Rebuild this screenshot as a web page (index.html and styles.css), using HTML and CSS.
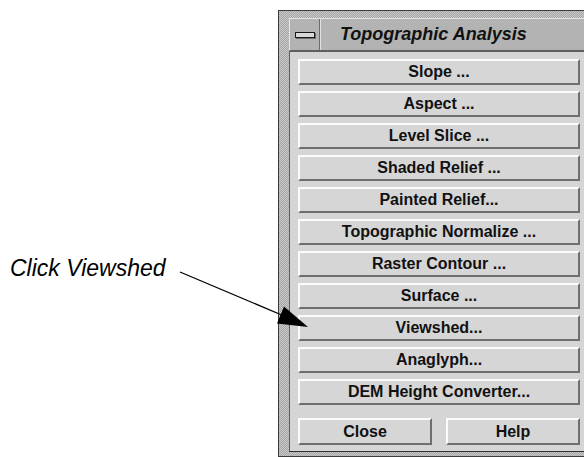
FILE: index.html
```html
<!DOCTYPE html>
<html lang="en">
<head>
    <meta charset="UTF-8">
    <meta name="viewport" content="width=device-width, initial-scale=1.0">
    <title>Topographic Analysis</title>
    <link rel="stylesheet" href="styles.css">
</head>
<body>
    <div class="page">
        <div class="callout">
            <span class="callout-label">Click Viewshed</span>
        </div>

        <div class="window">
            <div class="titlebar">
                <div class="menu-button"><span class="menu-glyph"></span></div>
                <div class="title">Topographic Analysis</div>
            </div>
            <div class="panel">
                <div class="actions">
                    <button type="button">Slope ...</button>
                    <button type="button">Aspect ...</button>
                    <button type="button">Level Slice ...</button>
                    <button type="button">Shaded Relief ...</button>
                    <button type="button">Painted Relief...</button>
                    <button type="button">Topographic Normalize ...</button>
                    <button type="button">Raster Contour ...</button>
                    <button type="button">Surface ...</button>
                    <button type="button">Viewshed...</button>
                    <button type="button">Anaglyph...</button>
                    <button type="button">DEM Height Converter...</button>
                </div>
                <div class="footer">
                    <button type="button">Close</button>
                    <button type="button">Help</button>
                </div>
            </div>
        </div>

        <svg class="pointer" width="584" height="457" viewBox="0 0 584 457">
            <line x1="180" y1="272" x2="284" y2="316" stroke="#000" stroke-width="1.3"/>
            <polygon points="308,327 284,306.5 277,323.5" fill="#000"/>
        </svg>
    </div>
</body>
</html>
```

FILE: styles.css
```css
body {
    margin: 0;
    background: #fff;
    font-family: "Liberation Sans", Arial, sans-serif;
    overflow: hidden;
}
.page {
    position: relative;
    display: flex;
    width: 584px;
    height: 457px;
    overflow: hidden;
}
.callout {
    flex-shrink: 0;
    width: 278px;
    padding: 254px 0 0 10px;
    box-sizing: border-box;
}
.callout-label {
    display: block;
    font-style: italic;
    font-size: 23px;
    line-height: 28px;
    color: #000;
}
.window {
    flex-shrink: 0;
    width: 322px;
    margin-top: 10px;
    padding: 7px 10px;
    border: 1px solid #3c3c3c;
    box-sizing: border-box;
    background: repeating-conic-gradient(#a4a4a4 0 25%, #cbcbcb 0 50%) 0 0 / 2px 2px;
}
.titlebar {
    display: flex;
    align-items: center;
    height: 33px;
    box-sizing: border-box;
    background: #b3b3b3;
    border: 1px solid;
    border-color: #e6e6e6 #5e5e5e #5e5e5e #e6e6e6;
}
.menu-button {
    display: flex;
    align-items: center;
    justify-content: center;
    width: 29px;
    height: 100%;
    border-right: 1px solid #6c6c6c;
    box-shadow: 1px 0 0 #e2e2e2;
}
.menu-glyph {
    width: 18px;
    height: 4px;
    border: 1px solid #1a1a1a;
    background: #d9d9d9;
    box-shadow: 1px 1px 0 #6c6c6c;
}
.title {
    padding-left: 20px;
    font-style: italic;
    font-weight: bold;
    font-size: 18px;
    color: #111;
}
.panel {
    padding: 7px 8px 6px;
    background: #d5d5d5;
    border: 1px solid;
    border-color: #5e5e5e #5e5e5e #2e2e2e #5e5e5e;
}
.actions {
    display: flex;
    flex-direction: column;
    gap: 6px;
}
.panel button {
    height: 26px;
    padding: 0;
    background: #d6d6d6;
    border: 2px solid;
    border-color: #fbfbfb #6e6e6e #6e6e6e #fbfbfb;
    font-family: "Liberation Sans", Arial, sans-serif;
    font-weight: bold;
    font-size: 16px;
    color: #111;
}
.footer {
    display: flex;
    gap: 14px;
    margin-top: 13px;
}
.footer button {
    flex: 1;
    height: 27px;
}
.pointer {
    position: absolute;
    top: 0;
    left: 0;
    pointer-events: none;
}
```
